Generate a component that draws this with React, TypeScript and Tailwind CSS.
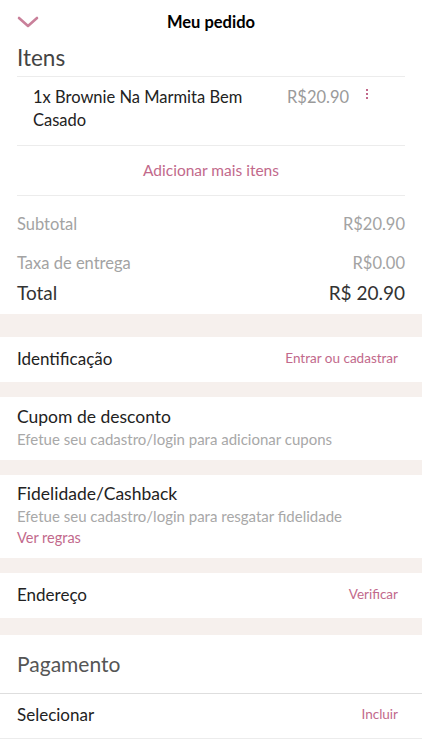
import React from "react";

const PINK = "text-[#c2698b]";

const Band = ({ h }: { h: string }) => <div className={`${h} bg-[#f6f0ed]`} />;

const RowLink = ({ title, action }: { title: string; action: string }) => (
    <div className="flex items-center justify-between h-[45px] pl-[17px] pr-[24px]">
        <span className="text-[17px] text-[#222] -mt-[2px]">{title}</span>
        <span className={`text-[13.5px] ${PINK} -mt-[2px]`}>{action}</span>
    </div>
);

export default function App() {
    return (
        <div className="w-[422px] min-h-[750px] bg-white font-['Lato',sans-serif] overflow-hidden">
            {/* header */}
            <div className="relative h-[44px] flex items-center justify-center">
                <svg className="absolute left-[17px] top-[16px]" width="22" height="12" viewBox="0 0 22 12">
                    <path d="M2 2 L11 10 L20 2" fill="none" stroke="#c9809a" strokeWidth="2.6" strokeLinecap="round" strokeLinejoin="round" />
                </svg>
                <span className="text-[16.5px] font-bold text-black">Meu pedido</span>
            </div>

            <div className="px-[17px]">
                <div className="text-[22.5px] text-[#444] leading-[28px] h-[32px]">Itens</div>
                <div className="border-t border-[#ececec]" />
                <div className="flex pl-[16px] pt-[9px] h-[68px]">
                    <div className="w-[245px] text-[16.5px] leading-[23px] text-[#222]">1x Brownie Na Marmita Bem Casado</div>
                    <div className="ml-[9px] text-[16.5px] leading-[23px] text-[#9a9a9a]">R$20.90</div>
                    <div className="ml-[17px] mt-[3px] flex flex-col gap-[2px]">
                        <span className="block w-[2px] h-[2px] bg-[#c2698b]" />
                        <span className="block w-[2px] h-[2px] bg-[#c2698b]" />
                        <span className="block w-[2px] h-[2px] bg-[#c2698b]" />
                    </div>
                </div>
                <div className="border-t border-[#ececec]" />
                <div className={`h-[49px] flex items-center justify-center text-[15.5px] ${PINK}`}>Adicionar mais itens</div>
                <div className="border-t border-[#ececec]" />

                <div className="pt-[17px] pb-[9px] text-[16.5px]">
                    <div className="flex justify-between text-[#a3a3a3] h-[23px] items-center">
                        <span>Subtotal</span>
                        <span>R$20.90</span>
                    </div>
                    <div className="flex justify-between text-[#a3a3a3] h-[23px] items-center mt-[16px]">
                        <span>Taxa de entrega</span>
                        <span>R$0.00</span>
                    </div>
                    <div className="flex justify-between text-[#333] text-[19px] h-[24px] items-center mt-[6px]">
                        <span>Total</span>
                        <span>R$ 20.90</span>
                    </div>
                </div>
            </div>

            <Band h="h-[23px]" />
            <RowLink title="Identificação" action="Entrar ou cadastrar" />
            <Band h="h-[15px]" />

            <div className="h-[63px] px-[17px] pt-[9px]">
                <div className="text-[17.5px] text-[#222] leading-[22px]">Cupom de desconto</div>
                <div className="text-[15px] text-[#a8a8a8] leading-[22px]">Efetue seu cadastro/login para adicionar cupons</div>
            </div>
            <Band h="h-[15px]" />

            <div className="h-[83px] px-[17px] pt-[8px]">
                <div className="text-[17.5px] text-[#222] leading-[22px]">Fidelidade/Cashback</div>
                <div className="text-[15px] text-[#a8a8a8] leading-[22px]">Efetue seu cadastro/login para resgatar fidelidade</div>
                <div className={`text-[14.5px] leading-[22px] ${PINK}`}>Ver regras</div>
            </div>
            <Band h="h-[15px]" />

            <RowLink title="Endereço" action="Verificar" />
            <Band h="h-[17px]" />

            <div className="h-[58px] flex items-center px-[17px] text-[21px] text-[#555]">Pagamento</div>
            <div className="border-t border-[#dedede]" />
            <div className="flex items-center justify-between h-[45px] pl-[17px] pr-[24px] border-b border-[#ececec]">
                <span className="text-[17px] text-[#222] -mt-[3px]">Selecionar</span>
                <span className={`text-[13.5px] ${PINK} -mt-[3px]`}>Incluir</span>
            </div>
        </div>
    );
}
